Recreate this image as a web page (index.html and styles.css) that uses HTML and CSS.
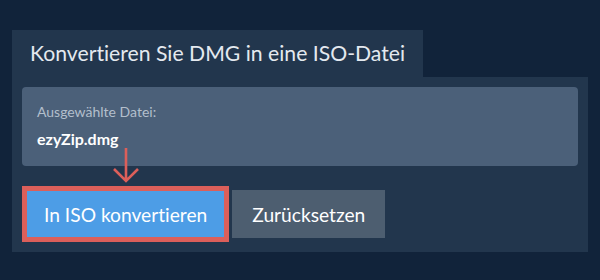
FILE: index.html
```html
<!DOCTYPE html>
<html lang="de">
<head>
<meta charset="utf-8">
<title>DMG zu ISO</title>
<link rel="stylesheet" href="styles.css">
</head>
<body>
<div class="wrap">
  <div class="tab">Konvertieren Sie DMG in eine ISO-Datei</div>
  <div class="panel">
    <div class="filebox">
      <div class="label">Ausgewählte Datei:</div>
      <div class="filename">ezyZip.dmg</div>
    </div>
    <div class="actions">
      <button class="btn btn-primary">In ISO konvertieren</button>
      <button class="btn btn-secondary">Zurücksetzen</button>
    </div>
    <svg class="arrow" width="30" height="36" viewBox="0 0 30 36">
      <path d="M15 0 V33 M3 21 L15 33 L27 21" fill="none" stroke="#dc5f5a" stroke-width="2.6"/>
    </svg>
  </div>
</div>
</body>
</html>
```

FILE: styles.css
```css
html, body {
  margin: 0;
  padding: 0;
  background: #11233a;
  width: 600px;
  height: 280px;
  overflow: hidden;
  font-family: Lato, "Open Sans", sans-serif;
  font-variant-ligatures: none;
}
.wrap {
  padding: 30px 12px 0 12px;
}
.tab {
  display: inline-block;
  background: #22364d;
  color: #e4e9ef;
  font-size: 21.2px;
  line-height: 47px;
  height: 47px;
  padding: 0 18px;
  white-space: nowrap;
}
.panel {
  position: relative;
  background: #22364d;
  padding: 10px;
  width: 556px;
}
.filebox {
  background: #4b6079;
  border-radius: 4px;
  height: 79px;
  box-sizing: border-box;
  padding: 16px 15px 0 15px;
}
.label {
  color: #b3bfcc;
  font-size: 14px;
  line-height: 18px;
}
.filename {
  color: #ffffff;
  font-weight: bold;
  font-size: 16px;
  line-height: 20px;
  margin-top: 8px;
}
.actions {
  display: flex;
  align-items: center;
  gap: 3px;
  margin-top: 20px;
}
.btn {
  font-family: Lato, "Open Sans", sans-serif;
  font-variant-ligatures: none;
  font-size: 19.2px;
  color: #ffffff;
  border: none;
  margin: 0;
  cursor: pointer;
}
.btn-primary {
  background: #4d9de6;
  border: 5px solid #dc5f5a;
  height: 56px;
  padding: 0 17px;
}
.btn-secondary {
  background: #4d5e70;
  height: 48px;
  padding: 0 20px;
}
.arrow {
  position: absolute;
  left: 99px;
  top: 71px;
}
```
